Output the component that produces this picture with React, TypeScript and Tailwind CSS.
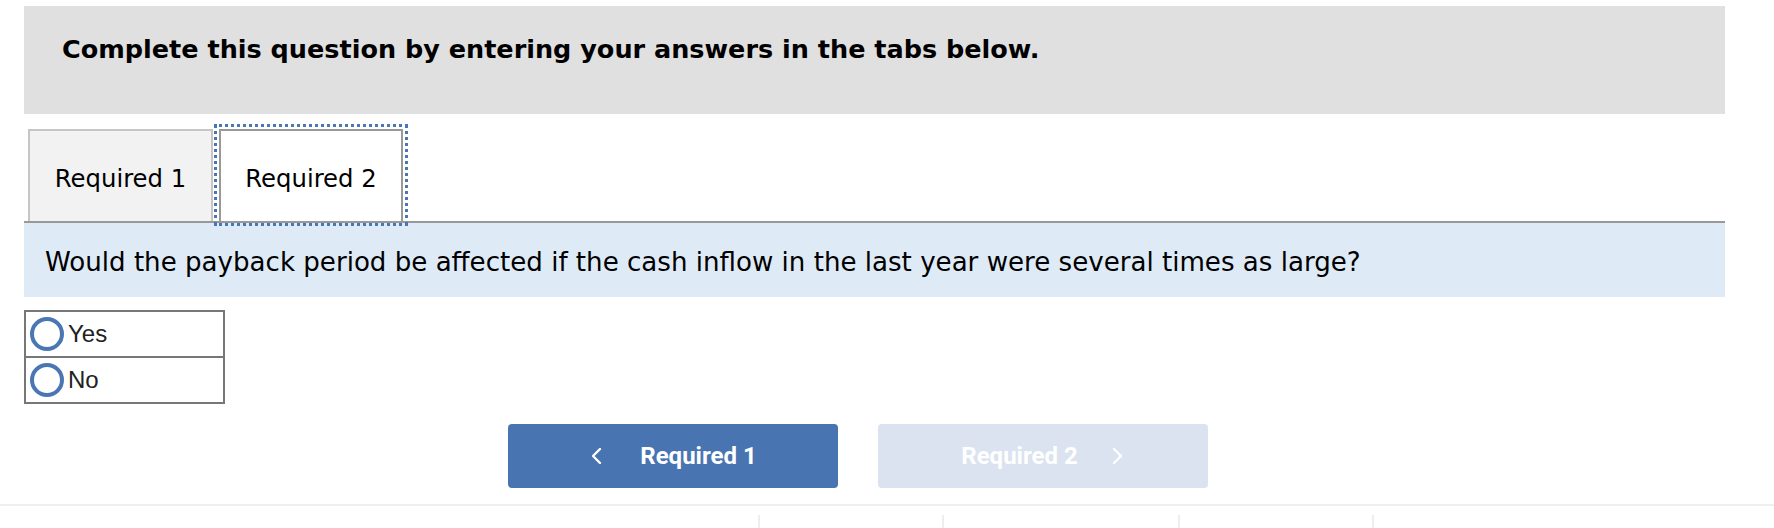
import { useState } from "react";

const verdana = "font-['DejaVu_Sans',Verdana,sans-serif]";

interface RadioRowProps {
  label: string;
  checked: boolean;
  onSelect: () => void;
}

const RadioRow = ({ label, checked, onSelect }: RadioRowProps) => (
  <button
    onClick={onSelect}
    className="flex h-[44px] w-full items-center gap-[4px] pl-[4px] text-left"
  >
    <span className="flex h-[34px] w-[34px] items-center justify-center rounded-full border-[4px] border-[#4a76b4] bg-white">
      {checked && <span className="h-[16px] w-[16px] rounded-full bg-[#4a76b4]" />}
    </span>
    <span className="font-['Liberation_Sans',Arial,sans-serif] text-[24px] text-[#222]">{label}</span>
  </button>
);

const ChevronLeft = () => (
  <svg width="14" height="18" viewBox="0 0 14 18" fill="none">
    <path d="M11 2 L4 9 L11 16" stroke="currentColor" strokeWidth="2.4" strokeLinecap="round" strokeLinejoin="round" />
  </svg>
);

const ChevronRight = () => (
  <svg width="14" height="18" viewBox="0 0 14 18" fill="none">
    <path d="M3 2 L10 9 L3 16" stroke="currentColor" strokeWidth="2.4" strokeLinecap="round" strokeLinejoin="round" />
  </svg>
);

export default function App() {
  const [answer, setAnswer] = useState<string | null>(null);

  return (
    <div className="min-h-[528px] w-[1774px] bg-white">
      <div className="px-[24px] pt-[6px]">
        {/* Instructions */}
        <div className="h-[108px] w-[1701px] bg-[#e0e0e0] pl-[38px] pt-[28px]">
          <h2 className={`${verdana} text-[25.5px] font-bold leading-[30px] text-black`}>
            Complete this question by entering your answers in the tabs below.
          </h2>
        </div>

        {/* Tabs */}
        <div className="mt-[15px] flex pl-[4px]">
          <div
            className={`${verdana} flex h-[92px] w-[185px] justify-center border-2 border-b-0 border-[#c6c6c6] bg-[#f2f2f2] pt-[30px] text-[24.3px] text-black`}
          >
            Required 1
          </div>
          <div
            className={`${verdana} ml-[6px] flex h-[92px] w-[184px] justify-center border-2 border-b-0 border-[#999] bg-white pt-[30px] text-[24.3px] text-black outline-[3px] outline-offset-[2px] outline-dotted outline-[#4a76b4]`}
          >
            Required 2
          </div>
        </div>

        {/* Question */}
        <div className="w-[1701px] border-t-2 border-[#999] bg-[#deebf7] pb-[20px] pl-[21px] pt-[24px]">
          <p className={`${verdana} text-[26.1px] leading-[30px] text-black`}>
            Would the payback period be affected if the cash inflow in the last year were several times as large?
          </p>
        </div>

        {/* Answers */}
        <div className="mt-[13px] w-[201px] border-2 border-[#777]">
          <RadioRow label="Yes" checked={answer === "yes"} onSelect={() => setAnswer("yes")} />
          <div className="border-t-2 border-[#777]">
            <RadioRow label="No" checked={answer === "no"} onSelect={() => setAnswer("no")} />
          </div>
        </div>

        {/* Navigation */}
        <div className="ml-[484px] mt-[20px] flex gap-[40px] font-['Roboto',sans-serif] text-[24px] font-bold text-white">
          <button className="flex h-[64px] w-[330px] items-center justify-center gap-[37px] rounded-[4px] bg-[#4874b2]">
            <ChevronLeft />
            <span>Required 1</span>
          </button>
          <button className="flex h-[64px] w-[330px] items-center justify-center gap-[33px] rounded-[4px] bg-[#dae3ef]">
            <span>Required 2</span>
            <ChevronRight />
          </button>
        </div>
      </div>

      {/* Footer strip */}
      <div className="mt-[16px] h-[2px] w-full bg-[#efefef]" />
      <div className="mt-[9px] flex h-[15px]">
        <div className="w-[760px] border-r-2 border-[#eeeeee]" />
        <div className="w-[184px] border-r-2 border-[#eeeeee]" />
        <div className="w-[236px] border-r-2 border-[#eeeeee]" />
        <div className="w-[194px] border-r-2 border-[#eeeeee]" />
      </div>
    </div>
  );
}
